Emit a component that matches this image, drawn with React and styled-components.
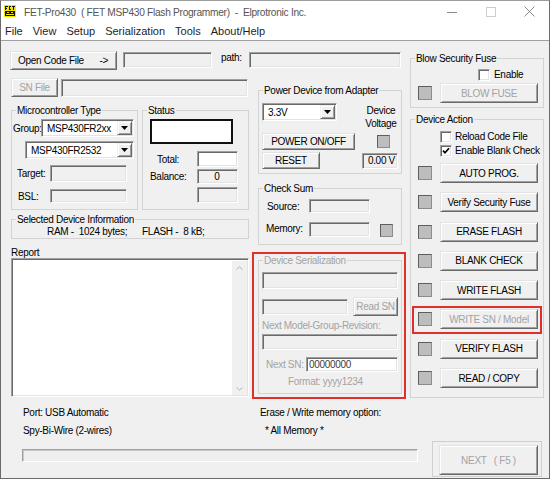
import React from "react";
import styled, { createGlobalStyle } from "styled-components";

const FONT = `"Liberation Sans", Arial, sans-serif`;

const GlobalStyle = createGlobalStyle`
  html, body { margin: 0; padding: 0; background: #fff; }
  * { box-sizing: border-box; }
`;

const Window = styled.div`
  width: 550px;
  height: 479px;
  display: flex;
  flex-direction: column;
  background: #fff;
  border: 1px solid #6b6b6b;
  border-top-color: #9c9c9c;
  overflow: hidden;
  font-family: ${FONT};
  font-size: 10px;
  letter-spacing: -0.3px;
  color: #000;
`;

const TitleBar = styled.div`
  display: flex;
  align-items: flex-start;
  height: 21px;
  padding-top: 4px;
  flex-shrink: 0;
`;

const IconBox = styled.svg`
  margin-left: 3px;
  flex-shrink: 0;
`;

const TitleText = styled.div`
  margin-left: 8px;
  font-size: 10.2px;
  letter-spacing: -0.3px;
  line-height: 16px;
  color: #555;
  white-space: pre;
`;

const Controls = styled.div`
  display: flex;
  margin-left: auto;
  margin-top: -4px;
`;

const ControlCell = styled.div`
  width: 39px;
  height: 21px;
  display: flex;
  align-items: center;
  justify-content: center;
`;

const MenuBar = styled.div`
  display: flex;
  gap: 10px;
  height: 18px;
  padding-left: 4px;
  font-size: 11px;
  letter-spacing: 0;
  line-height: 18px;
  color: #1e1e1e;
  flex-shrink: 0;
`;

const MenuItem = styled.span``;

const Client = styled.div`
  flex: 1;
  background: #f0f0f0;
  border-top: 1px solid #a0a0a0;
  padding-left: 9px;
  display: flex;
  flex-direction: column;
`;

const Main = styled.div`
  display: flex;
  align-items: flex-start;
`;

const LeftArea = styled.div`
  width: 391px;
  flex-shrink: 0;
`;

const TopRow = styled.div`
  display: flex;
  align-items: flex-start;
  margin-top: 10px;
  height: 19px;
`;

const Columns = styled.div`
  display: flex;
  align-items: flex-start;
`;

const LeftCol = styled.div`
  width: 239px;
  flex-shrink: 0;
`;

const MidCol = styled.div`
  width: 144px;
  margin-left: 9px;
  flex-shrink: 0;
`;

const RightCol = styled.div`
  width: 134px;
  margin-left: 9px;
  flex-shrink: 0;
`;

const Row = styled.div`
  display: flex;
  align-items: ${(p) => p.$align || "center"};
  margin-top: ${(p) => p.$mt || 0}px;
  padding-left: ${(p) => p.$pl || 0}px;
`;

const Label = styled.span`
  display: inline-block;
  width: ${(p) => (p.$w ? `${p.$w}px` : "auto")};
  margin-left: ${(p) => p.$ml || 0}px;
  line-height: 13px;
  white-space: pre;
  flex-shrink: 0;
  color: ${(p) => (p.$dim ? "#a3a3a3" : "#000")};
`;

const TextLine = styled.div`
  line-height: ${(p) => p.$lh || 13}px;
  margin-top: ${(p) => p.$mt || 0}px;
  padding-left: ${(p) => p.$pl || 0}px;
  color: ${(p) => (p.$dim ? "#a3a3a3" : "#000")};
  white-space: pre;
`;

const Field = styled.div`
  width: ${(p) => p.$w}px;
  height: ${(p) => p.$h}px;
  margin-left: ${(p) => p.$ml || 0}px;
  margin-top: ${(p) => p.$mt || 0}px;
  flex-shrink: 0;
  background: ${(p) => (p.$white ? "#fff" : "#f0f0f0")};
  border: 1px solid;
  border-color: #a0a0a0 #fff #fff #a0a0a0;
  box-shadow: inset 1px 1px #696969, inset -1px -1px #e3e3e3;
  padding: 0 ${(p) => p.$pr ?? 4}px 0 ${(p) => p.$pl ?? 3}px;
  line-height: ${(p) => p.$h - 2}px;
  text-align: ${(p) => p.$align || "left"};
  color: ${(p) => p.$ink || "#000"};
  overflow: hidden;
  white-space: pre;
`;

const Button = styled.button`
  width: ${(p) => p.$w}px;
  height: ${(p) => p.$h}px;
  margin-left: ${(p) => p.$ml || 0}px;
  flex-shrink: 0;
  display: flex;
  align-items: center;
  justify-content: ${(p) => (p.$split ? "space-between" : "center")};
  padding: ${(p) => (p.$split ? "0 8px 0 7px" : "0")};
  background: #f0f0f0;
  border: 1px solid;
  border-color: #e3e3e3 #696969 #696969 #e3e3e3;
  box-shadow: inset 1px 1px #fff, inset -1px -1px #a0a0a0;
  font-family: ${FONT};
  font-size: 10px;
  letter-spacing: -0.3px;
  color: ${(p) => (p.disabled ? "#a3a3a3" : "#000")};
  white-space: pre;
`;

const Combo = styled.div`
  width: ${(p) => p.$w}px;
  height: ${(p) => p.$h}px;
  margin-left: ${(p) => p.$ml || 0}px;
  flex-shrink: 0;
  display: flex;
  align-items: center;
  background: #fff;
  border: 1px solid;
  border-color: #a0a0a0 #fff #fff #a0a0a0;
  box-shadow: inset 1px 1px #696969, inset -1px -1px #e3e3e3;
  padding: 1px 1px 1px 5px;
`;

const ComboText = styled.span`
  flex: 1;
  line-height: 13px;
`;

const DropButton = styled.span`
  width: 15px;
  height: 100%;
  display: flex;
  align-items: center;
  justify-content: center;
  background: #f0f0f0;
  border: 1px solid;
  border-color: #f0f0f0 #696969 #696969 #f0f0f0;
  box-shadow: inset 1px 1px #fff, inset -1px -1px #a0a0a0;
`;

const Group = styled.fieldset`
  margin: ${(p) => p.$mt || 0}px 0 0 ${(p) => p.$ml || 0}px;
  padding: 0;
  width: ${(p) => p.$w}px;
  height: ${(p) => p.$h}px;
  min-width: 0;
  flex-shrink: 0;
  border: 1px solid #d3d3d3;
`;

const Legend = styled.legend`
  margin-left: 4px;
  padding: 0 1px;
  line-height: 13px;
  color: ${(p) => (p.$dim ? "#a3a3a3" : "#000")};
`;

const StatusBox = styled.div`
  width: 83px;
  height: 25px;
  margin: 2px 0 0 7px;
  background: #fff;
  border: 2px solid #111;
`;

const Indicator = styled.div`
  width: ${(p) => p.$s || 14}px;
  height: ${(p) => p.$s || 14}px;
  margin-left: ${(p) => p.$ml || 0}px;
  margin-top: ${(p) => p.$mt || 0}px;
  flex-shrink: 0;
  background: #bdbdbd;
  border: 1px solid;
  border-color: #5e5e5e #8c8c8c #8c8c8c #5e5e5e;
`;

const CheckBox = styled.span`
  width: 12px;
  height: 12px;
  flex-shrink: 0;
  display: flex;
  align-items: center;
  justify-content: center;
  background: #fff;
  border: 1px solid;
  border-color: #a0a0a0 #fff #fff #a0a0a0;
  box-shadow: inset 1px 1px #696969, inset -1px -1px #e3e3e3;
`;

const PowerGrid = styled.div`
  display: grid;
  grid-template-columns: 100px 38px;
  grid-template-rows: 28px 17px 17px;
  row-gap: 2px;
  padding: 6px 0 0 3px;
`;

const VoltageText = styled.div`
  text-align: center;
  line-height: 13px;
  margin-top: 1px;
`;

const Cell = styled.div`
  display: flex;
  align-items: ${(p) => p.$align || "center"};
  padding-left: ${(p) => p.$pl || 0}px;
`;

const ReportBox = styled.div`
  width: 238px;
  height: 139px;
  margin-left: 1px;
  display: flex;
  justify-content: flex-end;
  background: #fff;
  border: 1px solid;
  border-color: #a0a0a0 #fff #fff #a0a0a0;
  box-shadow: inset 1px 1px #696969, inset -1px -1px #e3e3e3;
  padding: 2px 1px 1px 2px;
`;

const ScrollBar = styled.div`
  width: 15px;
  height: 100%;
  background: #f0f0f0;
  display: flex;
  flex-direction: column;
  justify-content: space-between;
  align-items: center;
  padding: 5px 0 4px;
`;

const RedFrame = styled.div`
  border: 2px solid #e0302c;
  margin: ${(p) => p.$m};
  padding: ${(p) => p.$p};
`;

const GroupBody = styled.div`
  padding: ${(p) => p.$p || "0"};
`;

const ActionList = styled.div`
  display: flex;
  flex-direction: column;
  align-items: flex-start;
  gap: 9.3px;
  margin-top: 6px;
  padding-left: 7px;
`;

const ActionRow = styled.div`
  display: flex;
  align-items: center;
  height: 20px;
`;

const Bottom = styled.div`
  display: flex;
  align-items: flex-start;
  padding-left: 12px;
`;

const BottomLeft = styled.div`
  width: 396px;
  flex-shrink: 0;
  margin-top: 5px;
`;

const InfoGrid = styled.div`
  display: grid;
  grid-template-columns: 237px 1fr;
  padding-left: 1px;
  line-height: 18px;
  white-space: pre;
`;

const Progress = styled.div`
  height: 13px;
  margin-top: 9px;
  background: #efefef;
  border: 1px solid;
  border-color: #a0a0a0 #fff #fff #a0a0a0;
  box-shadow: inset 1px 1px #c8c8c8;
`;

const NextFrame = styled.div`
  margin: 42px 0 0 14px;
  width: 110px;
  height: 36px;
  border: 1px solid #d0d0d0;
  padding: 3px 0 0 6px;
`;

function AppIcon() {
  return (
    <IconBox width="12" height="12" viewBox="0 0 12 12">
      <rect width="12" height="12" fill="#f3e600" />
      <rect x="1" y="1" width="3" height="1" fill="#111" />
      <rect x="1" y="1" width="1" height="4" fill="#111" />
      <rect x="1" y="3" width="2" height="1" fill="#111" />
      <rect x="5" y="1" width="2" height="1" fill="#111" />
      <rect x="5" y="1" width="1" height="4" fill="#111" />
      <rect x="5" y="4" width="2" height="1" fill="#111" />
      <rect x="8" y="1" width="3" height="1" fill="#111" />
      <rect x="9" y="1" width="1" height="4" fill="#111" />
      <rect x="1" y="6" width="10" height="5" fill="#111" />
      <rect x="3" y="7" width="2" height="1" fill="#f3e600" />
      <rect x="7" y="7" width="2" height="1" fill="#f3e600" />
      <rect x="2" y="9" width="8" height="1" fill="#f3e600" />
    </IconBox>
  );
}

function Arrow() {
  return (
    <svg width="7" height="4" viewBox="0 0 7 4">
      <path d="M0 0h7L3.5 4z" fill="#000" />
    </svg>
  );
}

function ComboBox({ w, h = 18, ml, children }) {
  return (
    <Combo $w={w} $h={h} $ml={ml}>
      <ComboText>{children}</ComboText>
      <DropButton>
        <Arrow />
      </DropButton>
    </Combo>
  );
}

function Check({ checked }) {
  return (
    <CheckBox>
      {checked && (
        <svg width="8" height="8" viewBox="0 0 8 8">
          <path d="M1 3.6L3 5.8L7 1.2" stroke="#000" strokeWidth="1.7" fill="none" />
        </svg>
      )}
    </CheckBox>
  );
}

const menus = ["File", "View", "Setup", "Serialization", "Tools", "About/Help"];

const actions = [
  { label: "AUTO PROG." },
  { label: "Verify Security Fuse" },
  { label: "ERASE FLASH" },
  { label: "BLANK CHECK" },
  { label: "WRITE FLASH" },
  { label: "WRITE SN / Model", disabled: true, marked: true },
  { label: "VERIFY FLASH" },
  { label: "READ / COPY" },
];

function Action({ label, disabled }) {
  return (
    <ActionRow>
      <Indicator />
      <Button $w={98} $h={20} $ml={8} disabled={disabled}>
        {label}
      </Button>
    </ActionRow>
  );
}

export default function App() {
  return (
    <>
      <GlobalStyle />
      <Window>
        <TitleBar>
          <AppIcon />
          <TitleText>{"FET-Pro430  ( FET MSP430 Flash Programmer)  -  Elprotronic Inc."}</TitleText>
          <Controls>
            <ControlCell>
              <svg width="10" height="10">
                <path d="M0 5.5h10" stroke="#8a8a8a" />
              </svg>
            </ControlCell>
            <ControlCell>
              <svg width="10" height="10">
                <rect x="0.5" y="0.5" width="9" height="9" stroke="#cdcdcd" fill="none" />
              </svg>
            </ControlCell>
            <ControlCell>
              <svg width="11" height="11">
                <path d="M0.5 0.5l10 10M10.5 0.5l-10 10" stroke="#8a8a8a" />
              </svg>
            </ControlCell>
          </Controls>
        </TitleBar>

        <MenuBar>
          {menus.map((m) => (
            <MenuItem key={m}>{m}</MenuItem>
          ))}
        </MenuBar>

        <Client>
          <Main>
            <LeftArea>
              <TopRow>
                <Button $w={107} $h={19} $split>
                  <span>Open Code File</span>
                  <span>-&gt;</span>
                </Button>
                <Field $w={89} $h={16} $ml={6} $mt={1} />
                <Label $w={28} $ml={9}>path:</Label>
                <Field $w={152} $h={16} $mt={1} />
              </TopRow>

              <Columns>
                <LeftCol>
                  <Row $mt={8} $pl={1}>
                    <Button $w={47} $h={19} disabled>
                      SN File
                    </Button>
                    <Field $w={187} $h={18} $ml={3} />
                  </Row>

                  <Row $mt={7} $pl={1} $align="flex-start">
                    <Group $w={127} $h={106}>
                      <Legend>Microcontroller Type</Legend>
                      <Row $mt={2} $pl={1}>
                        <Label $w={28}>Group:</Label>
                        <ComboBox w={93}>MSP430FR2xx</ComboBox>
                      </Row>
                      <Row $mt={4} $pl={13}>
                        <ComboBox w={109}>MSP430FR2532</ComboBox>
                      </Row>
                      <Row $mt={6} $pl={5}>
                        <Label $w={33}>Target:</Label>
                        <Field $w={77} $h={17} />
                      </Row>
                      <Row $mt={7} $pl={6}>
                        <Label $w={32}>BSL:</Label>
                        <Field $w={77} $h={14} />
                      </Row>
                    </Group>

                    <Group $w={107} $h={106} $ml={4}>
                      <Legend>Status</Legend>
                      <StatusBox />
                      <Row $mt={7} $pl={14}>
                        <Label $w={40}>Total:</Label>
                        <Field $w={41} $h={16} $white />
                      </Row>
                      <Row $mt={2} $pl={7}>
                        <Label $w={47}>Balance:</Label>
                        <Field $w={41} $h={15} $align="center">
                          0
                        </Field>
                      </Row>
                      <Row $mt={3} $pl={54}>
                        <Field $w={41} $h={16} />
                      </Row>
                    </Group>
                  </Row>

                  <Group $w={238} $h={26} $mt={3} $ml={1}>
                    <Legend>Selected Device Information</Legend>
                    <TextLine $pl={35} $lh={12}>
                      {"RAM -  1024 bytes;      FLASH -  8 kB;"}
                    </TextLine>
                  </Group>

                  <TextLine $mt={8} $pl={1} $lh={11}>
                    Report
                  </TextLine>
                  <ReportBox>
                    <ScrollBar>
                      <svg width="7" height="4" viewBox="0 0 7 4">
                        <path d="M0.5 3.5L3.5 0.8L6.5 3.5" stroke="#b4b4b4" fill="none" />
                      </svg>
                      <svg width="7" height="4" viewBox="0 0 7 4">
                        <path d="M0.5 0.5L3.5 3.2L6.5 0.5" stroke="#b4b4b4" fill="none" />
                      </svg>
                    </ScrollBar>
                  </ReportBox>
                </LeftCol>

                <MidCol>
                  <Group $w={144} $h={90} $mt={14}>
                    <Legend>Power Device from Adapter</Legend>
                    <PowerGrid>
                      <Cell $align="flex-start">
                        <ComboBox w={75}>3.3V</ComboBox>
                      </Cell>
                      <VoltageText>
                        Device
                        <br />
                        Voltage
                      </VoltageText>
                      <Cell>
                        <Button $w={93} $h={17}>
                          POWER ON/OFF
                        </Button>
                      </Cell>
                      <Cell $pl={15}>
                        <Indicator $s={13} />
                      </Cell>
                      <Cell>
                        <Button $w={58} $h={17}>
                          RESET
                        </Button>
                      </Cell>
                      <Cell>
                        <Field $w={36} $h={16} $align="right" $pr={2}>
                          0.00 V
                        </Field>
                      </Cell>
                    </PowerGrid>
                  </Group>

                  <Group $w={144} $h={63} $mt={8}>
                    <Legend>Check Sum</Legend>
                    <Row $mt={4} $pl={8}>
                      <Label $w={42}>Source:</Label>
                      <Field $w={61} $h={14} />
                    </Row>
                    <Row $mt={9} $pl={7} $align="flex-start">
                      <Label $w={43}>Memory:</Label>
                      <Field $w={61} $h={15} />
                      <Indicator $s={13} $ml={10} $mt={2} />
                    </Row>
                  </Group>

                  <RedFrame $m="7px -4px 0 -6px" $p="0 2px 3px 4px">
                    <Group $w={144} $h={140}>
                      <Legend $dim>Device Serialization</Legend>
                      <GroupBody $p="0 0 0 3px">
                        <Field $w={136} $h={17} $mt={5} />
                        <Row $mt={8}>
                          <Field $w={86} $h={16} />
                          <Button $w={45} $h={19} $ml={5} disabled>
                            Read SN
                          </Button>
                        </Row>
                        <TextLine $mt={3} $dim>
                          Next Model-Group-Revision:
                        </TextLine>
                        <Field $w={136} $h={16} $mt={2} />
                        <Row $mt={7} $pl={4}>
                          <Label $w={40} $dim>
                            Next SN:
                          </Label>
                          <Field $w={92} $h={15} $white $ink="#3c3c3c" $pl={2}>
                            00000000
                          </Field>
                        </Row>
                        <TextLine $mt={3} $pl={26} $dim>
                          Format: yyyy1234
                        </TextLine>
                      </GroupBody>
                    </Group>
                  </RedFrame>
                </MidCol>
              </Columns>
            </LeftArea>

            <RightCol>
              <Group $w={134} $h={56} $mt={11}>
                <Legend>Blow Security Fuse</Legend>
                <Row $mt={3} $pl={67}>
                  <Check />
                  <Label $ml={4}>Enable</Label>
                </Row>
                <Row $mt={2} $pl={7}>
                  <Indicator />
                  <Button $w={98} $h={20} $ml={8} disabled>
                    BLOW FUSE
                  </Button>
                </Row>
              </Group>

              <Group $w={134} $h={285} $mt={5}>
                <Legend>Device Action</Legend>
                <Row $mt={4} $pl={29}>
                  <Check />
                  <Label $ml={3}>Reload Code File</Label>
                </Row>
                <Row $mt={1} $pl={29}>
                  <Check checked />
                  <Label $ml={3}>Enable Blank Check</Label>
                </Row>
                <ActionList>
                  {actions.map((a) =>
                    a.marked ? (
                      <RedFrame key={a.label} $m="-3px -4px -5px -6px" $p="1px 2px 3px 4px">
                        <Action label={a.label} disabled={a.disabled} />
                      </RedFrame>
                    ) : (
                      <Action key={a.label} label={a.label} disabled={a.disabled} />
                    )
                  )}
                </ActionList>
              </Group>
            </RightCol>
          </Main>

          <Bottom>
            <BottomLeft>
              <InfoGrid>
                <span>Port: USB Automatic</span>
                <span>Erase / Write memory option:</span>
                <span>Spy-Bi-Wire (2-wires)</span>
                <span>{"  * All Memory *"}</span>
              </InfoGrid>
              <Progress />
            </BottomLeft>
            <NextFrame>
              <Button $w={99} $h={30} disabled>
                {"NEXT   ( F5 )"}
              </Button>
            </NextFrame>
          </Bottom>
        </Client>
      </Window>
    </>
  );
}
